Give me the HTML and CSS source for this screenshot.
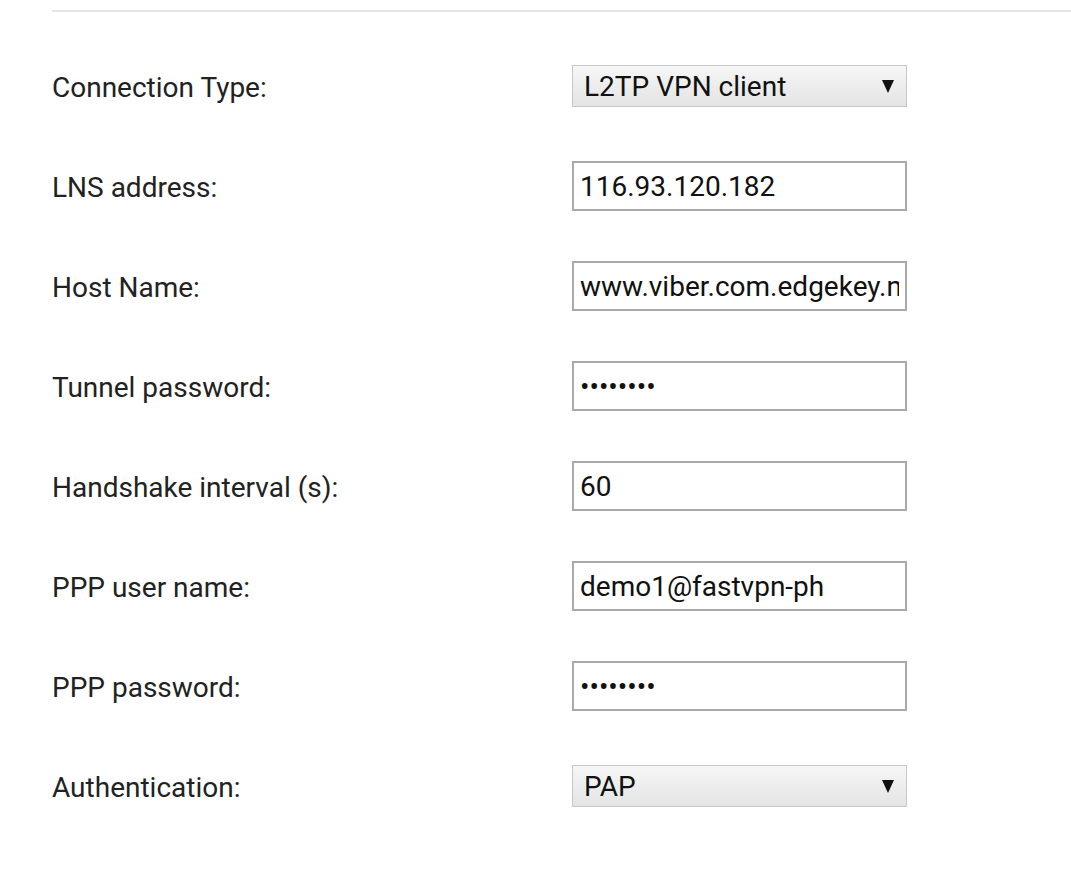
FILE: index.html
```html
<!DOCTYPE html>
<html lang="en">
<head>
    <meta charset="UTF-8">
    <title>WAN Settings - L2TP</title>
    <link rel="stylesheet" href="styles.css">
</head>
<body>
    <div class="pagina">
        <div class="separador"></div>

        <form class="formulario">
            <label class="etiqueta" for="tipo">Connection Type:</label>
            <div class="caja-select">
                <select id="tipo" class="campo-select">
                    <option>L2TP VPN client</option>
                    <option>PPTP VPN client</option>
                    <option>PPPoE</option>
                </select>
            </div>

            <label class="etiqueta" for="lns">LNS address:</label>
            <input class="campo" type="text" id="lns" value="116.93.120.182">

            <label class="etiqueta" for="host">Host Name:</label>
            <input class="campo" type="text" id="host" value="www.viber.com.edgekey.net">

            <label class="etiqueta" for="tunel">Tunnel password:</label>
            <input class="campo" type="password" id="tunel" value="12345678">

            <label class="etiqueta" for="intervalo">Handshake interval (s):</label>
            <input class="campo" type="text" id="intervalo" value="60">

            <label class="etiqueta" for="usuario">PPP user name:</label>
            <input class="campo" type="text" id="usuario" value="demo1@fastvpn-ph">

            <label class="etiqueta" for="clave">PPP password:</label>
            <input class="campo" type="password" id="clave" value="12345678">

            <label class="etiqueta" for="auth">Authentication:</label>
            <div class="caja-select">
                <select id="auth" class="campo-select">
                    <option>PAP</option>
                    <option>CHAP</option>
                    <option>Auto</option>
                </select>
            </div>
        </form>
    </div>
</body>
</html>
```

FILE: styles.css
```css
body {
    margin: 0;
    background: #ffffff;
    font-family: Roboto, "Liberation Sans", sans-serif;
    color: #222222;
}

.pagina {
    padding: 10px 0 0 52px;
}

.separador {
    height: 2px;
    background-color: #e4e4e4;
}

.formulario {
    display: grid;
    grid-template-columns: 520px 335px;
    grid-auto-rows: 100px;
    align-items: center;
    margin-top: 24px;
}

.etiqueta {
    font-size: 28px;
    color: #222222;
    padding-top: 2px;
}

.campo {
    box-sizing: border-box;
    width: 335px;
    height: 50px;
    border: 2px solid #a9a9a9;
    padding: 0 6px;
    font-family: Roboto, "Liberation Sans", sans-serif;
    font-size: 28px;
    color: #111111;
    background: #ffffff;
    outline: none;
}

.caja-select {
    position: relative;
    width: 335px;
}

.caja-select::after {
    content: "";
    position: absolute;
    right: 13px;
    top: 15px;
    border-left: 6.5px solid transparent;
    border-right: 6.5px solid transparent;
    border-top: 13px solid #111111;
    pointer-events: none;
}

.campo-select {
    appearance: none;
    -webkit-appearance: none;
    box-sizing: border-box;
    width: 335px;
    height: 42px;
    border: 1px solid #c8c8c8;
    border-radius: 0;
    padding: 0 11px;
    font-family: Roboto, "Liberation Sans", sans-serif;
    font-size: 28px;
    color: #111111;
    background: linear-gradient(#f6f6f6, #e4e4e4);
    outline: none;
}
```
